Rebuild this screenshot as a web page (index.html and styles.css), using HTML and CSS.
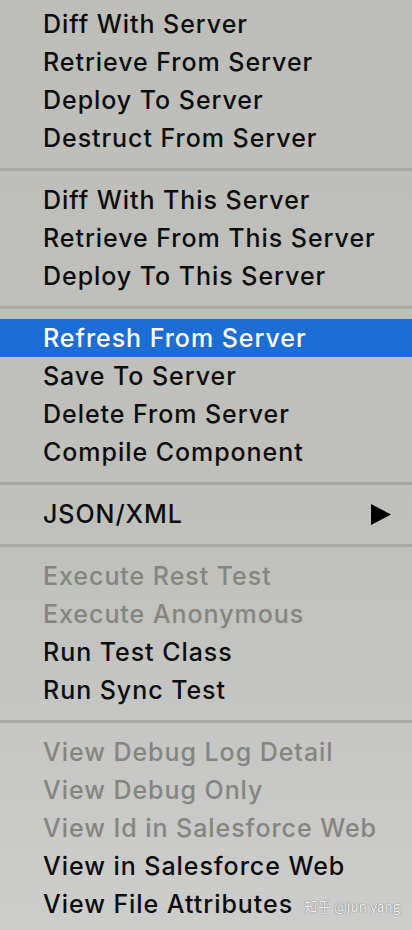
FILE: index.html
```html
<!DOCTYPE html>
<html>
<head>
<meta charset="utf-8">
<link rel="stylesheet" href="styles.css">
</head>
<body>
<div class="menu">
  <div class="item">Diff With Server</div>
  <div class="item">Retrieve From Server</div>
  <div class="item">Deploy To Server</div>
  <div class="item">Destruct From Server</div>
  <div class="sep"></div>
  <div class="item">Diff With This Server</div>
  <div class="item">Retrieve From This Server</div>
  <div class="item">Deploy To This Server</div>
  <div class="sep"></div>
  <div class="item active">Refresh From Server</div>
  <div class="item">Save To Server</div>
  <div class="item">Delete From Server</div>
  <div class="item">Compile Component</div>
  <div class="sep"></div>
  <div class="item submenu"><span>JSON/XML</span><svg class="arrow" width="20" height="21" viewBox="0 0 20 21"><polygon points="0,0 20,10.5 0,21" fill="#000"/></svg></div>
  <div class="sep"></div>
  <div class="item disabled">Execute Rest Test</div>
  <div class="item disabled">Execute Anonymous</div>
  <div class="item">Run Test Class</div>
  <div class="item">Run Sync Test</div>
  <div class="sep"></div>
  <div class="item disabled">View Debug Log Detail</div>
  <div class="item disabled">View Debug Only</div>
  <div class="item disabled">View Id in Salesforce Web</div>
  <div class="item">View in Salesforce Web</div>
  <div class="item last">View File Attributes<span class="watermark">知乎 @jun yang</span></div>
</div>
</body>
</html>
```
FILE: styles.css
```css
html, body {
  margin: 0;
  padding: 0;
  width: 412px;
  height: 930px;
  overflow: hidden;
}
body {
  background: linear-gradient(to bottom, #bdbdba 0%, #c0c0bd 60%, #cdcdcc 100%);
  font-family: Inter, "Liberation Sans", Arial, sans-serif;
}
.menu {
  padding-top: 5px;
  display: flex;
  flex-direction: column;
}
.item {
  height: 38px;
  display: flex;
  align-items: center;
  padding-left: 43px;
  padding-right: 21px;
  font-size: 25px;
  font-weight: 450;
  letter-spacing: 0.95px;
  color: #0d0d0d;
  white-space: nowrap;
}
.item.active {
  background: #1d6dd5;
  color: #fff;
}
.item.disabled {
  color: #85857f;
}
.submenu {
  justify-content: space-between;
}
.arrow {
  display: block;
}
.sep {
  height: 24px;
  display: flex;
  flex-direction: column;
  justify-content: center;
}
.sep::before {
  content: "";
  display: block;
  height: 3px;
  background: #a8a8a5;
}
.last {
  gap: 11px;
}
.watermark {
  font-family: "Noto Sans CJK SC", "Liberation Sans", sans-serif;
  font-size: 13.5px;
  font-weight: 400;
  letter-spacing: 0;
  color: #f2f2f2;
  text-shadow: 0 0 1px #777, 0 0 1px #777;
  padding-top: 3px;
}
```
